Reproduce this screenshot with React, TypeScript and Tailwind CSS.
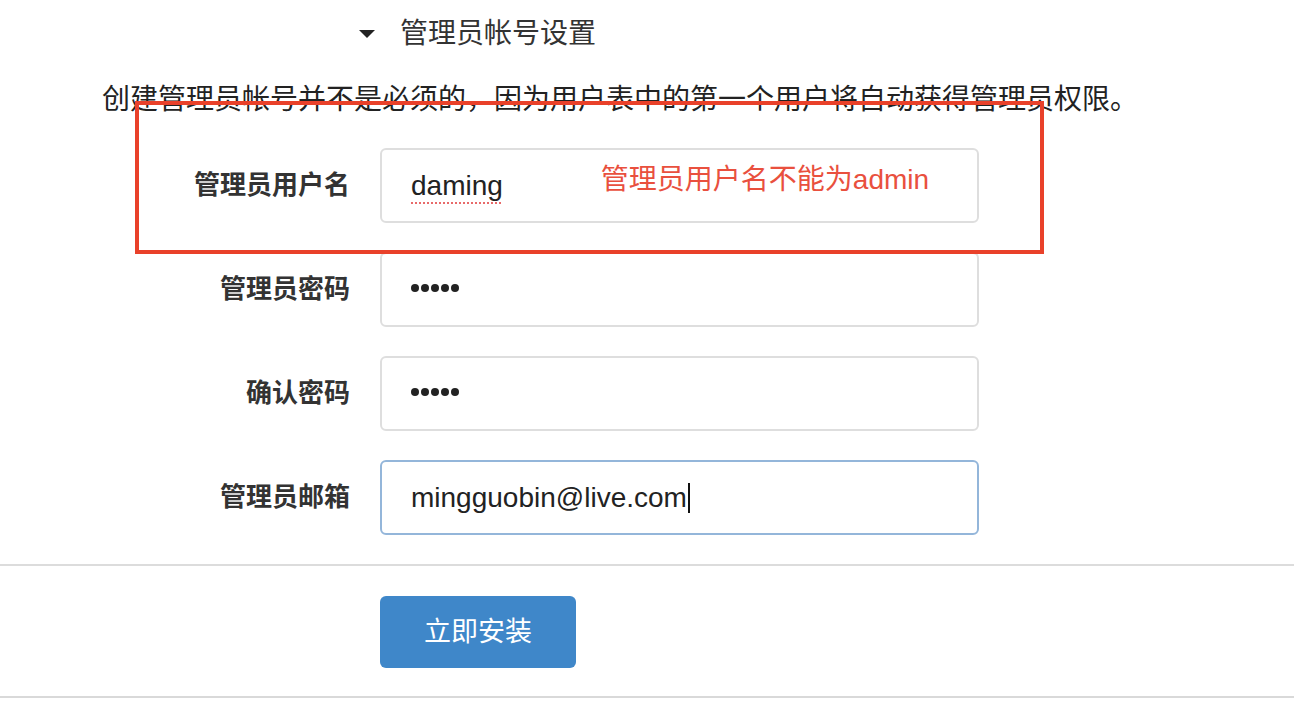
import React from 'react';

const font = "font-['Liberation_Sans','Noto_Sans_CJK_SC',sans-serif]";

const rows = [
  { label: '管理员用户名', value: 'daming', kind: 'text' },
  { label: '管理员密码', value: '•••••', kind: 'pwd' },
  { label: '确认密码', value: '•••••', kind: 'pwd' },
  { label: '管理员邮箱', value: 'mingguobin@live.com', kind: 'focus' },
];

export default function App() {
  return (
    <div className={`relative w-[1294px] h-[724px] bg-white text-[#333] overflow-hidden ${font}`}>
      {/* Section header */}
      <div className="flex items-center h-[68px] pl-[359px]">
        <svg className="w-4 h-2 mr-[25px]" viewBox="0 0 16 8">
          <path d="M0 0h16L8 8z" fill="#222" />
        </svg>
        <span className="text-[28px] leading-none">管理员帐号设置</span>
      </div>

      <p className="pl-[102px] pt-[18px] text-[28px] leading-none text-[#222]">
        创建管理员帐号并不是必须的，因为用户表中的第一个用户将自动获得管理员权限。
      </p>

      {/* Form rows */}
      <div className="flex flex-col gap-[29px] mt-[34px]">
        {rows.map((r, i) => (
          <div key={i} className="flex items-center">
            <label className="w-[350px] text-right text-[26px] font-bold text-[#333]">{r.label}</label>
            <div
              className={`ml-[30px] w-[599px] h-[75px] rounded-[6px] border-2 flex items-center pl-[29px] ${
                r.kind === 'focus' ? 'border-[#94b6da]' : 'border-[#dedede]'
              }`}
            >
              {r.kind === 'pwd' ? (
                <span className="flex gap-[2px] -mt-[4px]" aria-label={r.value}>
                  {[0, 1, 2, 3, 4].map((d) => (
                    <span key={d} className="w-[8px] h-[8px] rounded-full bg-[#222]" />
                  ))}
                </span>
              ) : (
                <span
                  className={`text-[28px] text-[#222] leading-none ${
                    r.kind === 'text' ? 'underline decoration-dotted decoration-[#e86a6a] decoration-2 underline-offset-[8px]' : ''
                  }`}
                >
                  {r.value}
                </span>
              )}
              {r.kind === 'focus' && <span className="w-[2px] h-[30px] bg-[#111] ml-[1px]" />}
              {r.kind === 'text' && (
                <span className="ml-[98px] -mt-[12px] text-[28px] text-[#e9503e]">管理员用户名不能为admin</span>
              )}
            </div>
          </div>
        ))}
      </div>

      <div className="mt-[29px] h-[2px] bg-[#dcdcdc]" />
      <div className="pl-[380px] pt-[30px] pb-[28px]">
        <button className="w-[196px] h-[72px] rounded-[6px] bg-[#3f87c9] text-white text-[27px]">立即安装</button>
      </div>
      <div className="h-[2px] bg-[#d9d9d9]" />

      {/* Annotation box */}
      <div className="absolute left-[135px] top-[101px] w-[909px] h-[153px] border-4 border-[#e9412a] pointer-events-none" />
    </div>
  );
}
